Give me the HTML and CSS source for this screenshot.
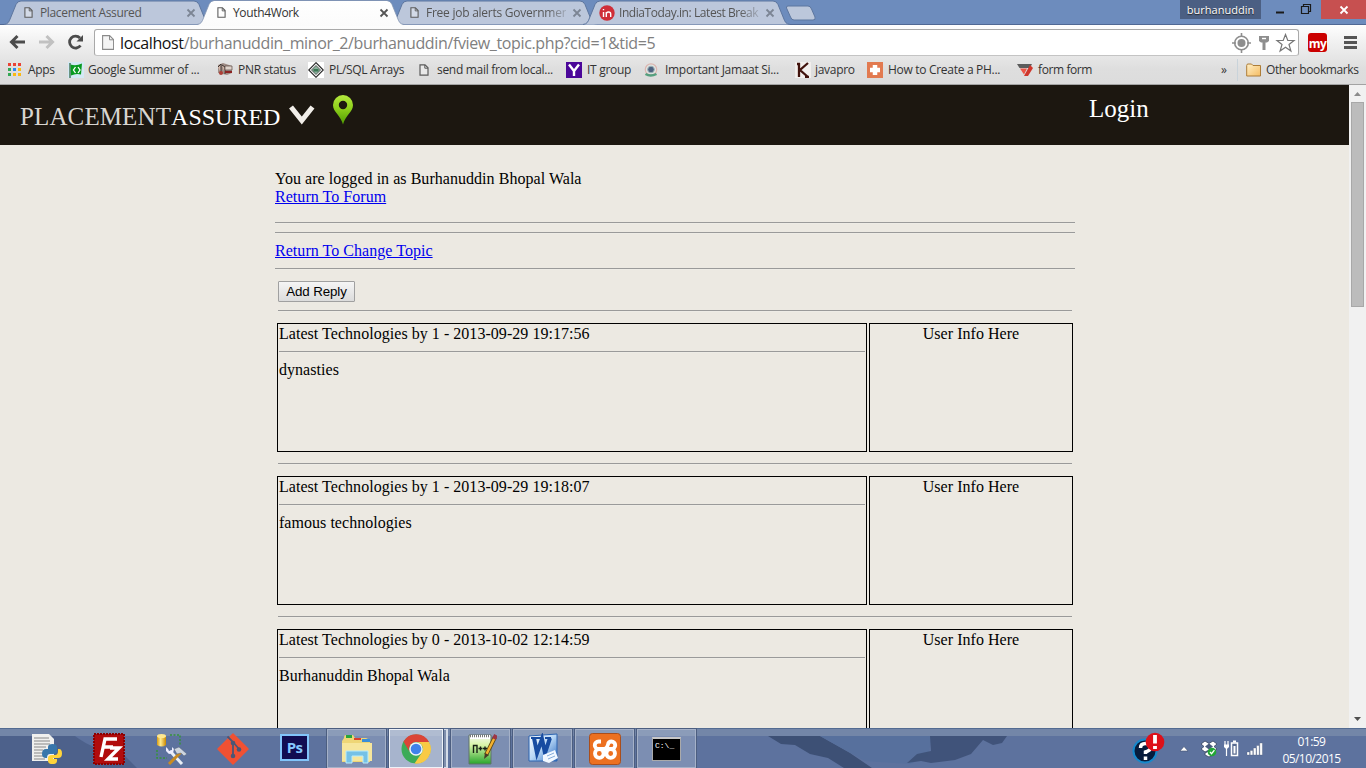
FILE: index.html
```html
<!DOCTYPE html>
<html lang="en">
<head>
<meta charset="utf-8">
<title>Youth4Work</title>
<link rel="stylesheet" href="styles.css">
</head>
<body>
<svg class="defs" aria-hidden="true">
  <defs>
    <linearGradient id="tabActive" x1="0" y1="0" x2="0" y2="1"><stop offset="0" stop-color="#fff"/><stop offset="1" stop-color="#fbfbfb"/></linearGradient>
    <linearGradient id="pin" x1="0" y1="0" x2="0" y2="1"><stop offset="0" stop-color="#b4e83e"/><stop offset=".45" stop-color="#8fd01c"/><stop offset="1" stop-color="#4d9a00"/></linearGradient>
    <linearGradient id="folder" x1="0" y1="0" x2="1" y2="1"><stop offset="0" stop-color="#fff0c8"/><stop offset="1" stop-color="#f5bc62"/></linearGradient>
    <linearGradient id="gold" x1="0" y1="0" x2="1" y2="0"><stop offset="0" stop-color="#d89a10"/><stop offset=".4" stop-color="#ffeb90"/><stop offset="1" stop-color="#c98700"/></linearGradient>
    <linearGradient id="npp" x1="0" y1="0" x2="0" y2="1"><stop offset="0" stop-color="#f4f8f2"/><stop offset=".35" stop-color="#d9f4a8"/><stop offset="1" stop-color="#28a52c"/></linearGradient>
    <linearGradient id="word" x1="0" y1="0" x2="1" y2="1"><stop offset="0" stop-color="#fff"/><stop offset=".5" stop-color="#b6d6f5"/><stop offset="1" stop-color="#2d6cc2"/></linearGradient>
    <symbol id="doc" viewBox="0 0 10 12"><path d="M1 .8h5l3 3v7.4H1z" fill="#fff" fill-opacity=".35" stroke="#5b5b5b" stroke-width="1.2"/><path d="M5.8 1v3.2H9" fill="none" stroke="#5b5b5b"/></symbol>
    <symbol id="x" viewBox="0 0 10 10"><path d="M1.5 1.5l7 7m0-7l-7 7" stroke="currentColor" stroke-width="1.8"/></symbol>
    <symbol id="tab" viewBox="0 0 207 25"><path d="M0 24.5C4 24 5 22 6.500 18L12 4.500Q13.500 1 17 1H190Q193.500 1 195 4.500L200.500 18C202 22 203 24 207 24.500" fill="#bcc7db" stroke="#5d769f"/></symbol>
  </defs>
</svg>

<div class="tabstrip">
  <div class="tab"><svg class="tab-bg"><use href="#tab"/></svg><svg class="doc"><use href="#doc"/></svg><span class="tab-title t1">Placement Assured</span><svg class="close"><use href="#x"/></svg></div>
  <div class="tab active"><svg class="tab-bg" viewBox="0 0 207 26"><path d="M0 25C4 24 5 22 6.500 18L12 4.500Q13.500 1 17 1H190Q193.500 1 195 4.500L200.500 18C202 22 203 24 207 25V26H0z" fill="url(#tabActive)"/><path d="M0 24.500C4 24 5 22 6.500 18L12 4.500Q13.500 .5 17 .5H190Q193.500 .5 195 4.500L200.500 18C202 22 203 24 207 24.500" fill="none" stroke="#8495b3" stroke-width=".8"/></svg><svg class="doc"><use href="#doc"/></svg><span class="tab-title t2">Youth4Work</span><svg class="close"><use href="#x"/></svg></div>
  <div class="tab"><svg class="tab-bg"><use href="#tab"/></svg><svg class="doc"><use href="#doc"/></svg><span class="tab-title t3 fade">Free job alerts Governmen</span><svg class="close"><use href="#x"/></svg></div>
  <div class="tab last"><svg class="tab-bg"><use href="#tab"/></svg><svg class="in" viewBox="0 0 16 16"><circle cx="8" cy="8" r="7.700" fill="#cf2e38"/><path d="M4.500 7v5M4.500 4v1.300M7.300 12V7M7.300 9q0-2 2.200-2t2.200 2v3" fill="none" stroke="#fff" stroke-width="1.400"/></svg><span class="tab-title t4 fade">IndiaToday.in: Latest Break</span><svg class="close"><use href="#x"/></svg></div>
  <svg class="newtab" viewBox="0 0 32 16"><path d="M3 1H23Q25.500 1 26.500 4L30 12Q31 15 28 15H9Q6.500 15 5.500 12L1.500 3Q1 1 3 1z" fill="#bcc7db" stroke="#5d769f"/></svg>
  <div class="window-controls">
    <span class="profile">burhanuddin</span>
    <svg class="win" viewBox="0 0 40 19"><path d="M3 12.500h8" stroke="#1a1a1a" stroke-width="2"/><path d="M28.500 6.500h7v7h-7zM30.500 6V4.500h7v7H36" fill="none" stroke="#1a1a1a" stroke-width="1.200"/></svg>
    <span class="win-close"><svg viewBox="0 0 10 10"><path d="M1.500 1.500l7 7m0-7l-7 7" stroke="#fff" stroke-width="1.800"/></svg></span>
  </div>
</div>

<div class="chrome">
  <div class="toolbar">
    <svg class="nav" viewBox="0 0 90 30">
      <path d="M25 17H12M17.500 11l-6 6 6 6" fill="none" stroke="#4c4c4c" stroke-width="3"/>
      <path d="M39 17h13M46.500 11l6 6-6 6" fill="none" stroke="#c1c1c1" stroke-width="3"/>
      <path d="M80.500 20.500A6 6 0 1 1 80 13" fill="none" stroke="#4c4c4c" stroke-width="2.800"/><path d="M83 10v6.500h-6.500z" fill="#4c4c4c"/>
    </svg>
    <div class="omnibox">
      <svg class="page" viewBox="0 0 12 15"><path d="M.6.6h7l4 4v9.800H.6z" fill="#f4f4f4" stroke="#8a8a8a" stroke-width="1.100"/><path d="M7.500.8v4h4" fill="none" stroke="#8a8a8a"/></svg>
      <span class="url"><b>localhost</b>/burhanuddin_minor_2/burhanuddin/fview_topic.php?cid=1&amp;tid=5</span>
      <svg class="omni-icons" viewBox="0 0 64 20">
        <g fill="none" stroke="#8e8e8e" stroke-width="1.600"><circle cx="9.500" cy="10" r="6.800"/><path d="M9.500 0v4M9.500 16v4M0 10h4M15 10h4"/></g><circle cx="9.500" cy="10" r="4" fill="#8e8e8e"/>
        <path d="M27 3h10v5l-2 1.500h-1.500V17h-3V9.500H29L27 8z" fill="#8e8e8e"/><path d="M30 5.500h4" stroke="#fff" stroke-width="1.400"/>
        <path d="M53.500 1.500l2.300 6h6.200l-5 4 1.900 6.500-5.400-3.800-5.400 3.800 1.900-6.500-5-4h6.200z" fill="#fff" stroke="#777" stroke-width="1.200"/>
      </svg>
    </div>
    <span class="my">my</span>
    <span class="burger"></span>
  </div>
  <div class="bookmarks">
    <div class="bm"><svg viewBox="0 0 16 16"><path d="M0 1h3v3H0z M5 1h3v3H5z M10 1h3v3h-3z" fill="#ea4335"/><path d="M0 6h3v3H0zM0 11h3v3H0z" fill="#34a853"/><path d="M5 6h3v3H5z" fill="#2b88f0"/><path d="M10 6h3v3h-3zM5 11h3v3H5zM10 11h3v3h-3z" fill="#fbb912"/></svg><span class="b1">Apps</span></div>
    <div class="bm"><svg viewBox="0 0 16 16"><path d="M0 0h16v16H0z" fill="#d4e9f5"/><path d="M2 1v15" stroke="#235b35" stroke-width="1.200"/><path d="M2.500 2.500Q8 4.500 14 1.500L13 12.500Q8 11 3 13.500z" fill="#089a20"/><path d="M7.500 5L5.500 8l2 3M10 5l2 3-2 3" stroke="#fff" stroke-width="1.300" fill="none"/></svg><span class="b2">Google Summer of ...</span></div>
    <div class="bm"><svg viewBox="0 0 16 16"><path d="M1 3l5-2 9 3v7l-5 2-9-2z" fill="#a08d86"/><path d="M1 5l3-3v9M5 3l3 2v7" stroke="#3b3331" fill="#d3b7a9"/><path d="M8 4h7v4H8z" fill="#ded2ca" stroke="#5c4a45" stroke-width=".7"/><path d="M8 9h7v2H8z" fill="#8d2222"/><circle cx="4" cy="11" r="2" fill="#ad3e36"/></svg><span class="b3">PNR status</span></div>
    <div class="bm"><svg viewBox="0 0 16 16"><path d="M0 0h16v16H0z" fill="#fff"/><path d="M8 .7L15.300 8 8 15.300.7 8z" fill="#f4f4f4" stroke="#222" stroke-width="1.100"/><path d="M8 3.500L12.500 8 8 12.500 3.500 8z" fill="#88b09a" stroke="#444" stroke-width=".8"/><path d="M5.500 7h5v2.500h-5z" fill="#3c7655"/></svg><span class="b4">PL/SQL Arrays</span></div>
    <div class="bm"><svg class="doc"><use href="#doc"/></svg><span class="b5">send mail from local...</span></div>
    <div class="bm"><svg viewBox="0 0 16 16"><path d="M0 0h16v16H0z" fill="#4b0799"/><path d="M3 2.500l5 6.500 5-6.500M8 9v5" fill="none" stroke="#fff" stroke-width="2.400"/></svg><span class="b6">IT group</span></div>
    <div class="bm"><svg viewBox="0 0 16 16"><circle cx="7" cy="7.500" r="5.700" fill="#dfe5e3" stroke="#dcb5af" stroke-width="1.200"/><circle cx="7" cy="7.500" r="3.300" fill="#4d6280" stroke="#9db3b7"/><path d="M1.500 12q5 3 11 0" stroke="#55a07f" stroke-width="2.500" fill="none"/></svg><span class="b7">Important Jamaat Si...</span></div>
    <div class="bm"><svg viewBox="0 0 16 16"><path d="M0 0h16v16H0z" fill="#f2efed"/><path d="M4 1v14M13 1L5 8l8 7M2 2h3M10 15h4" fill="none" stroke="#41130d" stroke-width="2.300"/></svg><span class="b8">javapro</span></div>
    <div class="bm"><svg viewBox="0 0 16 16"><path d="M0 0h16v16H0z" fill="#e27a50"/><path d="M8 3v10M3 8h10" stroke="#fff" stroke-width="4.500"/></svg><span class="b9">How to Create a PH...</span></div>
    <div class="bm"><svg viewBox="0 0 16 16"><path d="M0 2h15l-2 4H2.500z" fill="#5c5c5c"/><path d="M3 6.500h7l-3 6z" fill="#ec5546"/><path d="M13 3l3 3-5 8H7z" fill="#cf362b"/></svg><span class="b10">form form</span></div>
    <span class="more">»</span>
    <div class="bm other"><svg viewBox="0 0 16 16"><path d="M.7 3.500Q.7 2 2 2h3.500L7 3.500h7.500V14H.7z" fill="url(#folder)" stroke="#ad7d38"/></svg><span class="b11">Other bookmarks</span></div>
  </div>
</div>

<div class="viewport">
  <div class="site">
    <header class="site-header">
      <span class="brand"><span class="brand-a">PLACEMENT</span><span class="brand-b">ASSURED</span></span>
      <svg class="chev" viewBox="0 0 26 20"><path d="M2 2l10.800 13.500L23.500 2" fill="none" stroke="#f1eee9" stroke-width="5"/></svg>
      <svg class="marker" viewBox="0 0 20 30"><path fill-rule="evenodd" d="M10 0a10 10 0 0 1 10 10C20 17 12.500 20 10 29.500 7.500 20 0 17 0 10A10 10 0 0 1 10 0zm0 5.800a4.200 4.200 0 1 0 0 8.400 4.200 4.200 0 0 0 0-8.400z" fill="url(#pin)"/></svg>
      <span class="login">Login</span>
    </header>
    <main class="forum">
      <p>You are logged in as Burhanuddin Bhopal Wala<br><a href="#">Return To Forum</a></p>
      <hr><hr>
      <a class="row-link" href="#">Return To Change Topic</a>
      <hr>
      <div class="topic">
        <button class="reply">Add Reply</button>
        <hr>
        <div class="post"><div class="cell">Latest Technologies by 1 - 2013-09-29 19:17:56<hr>dynasties</div><div class="cell user">User Info Here</div></div>
        <hr>
        <div class="post"><div class="cell">Latest Technologies by 1 - 2013-09-29 19:18:07<hr>famous technologies</div><div class="cell user">User Info Here</div></div>
        <hr>
        <div class="post"><div class="cell">Latest Technologies by 0 - 2013-10-02 12:14:59<hr>Burhanuddin Bhopal Wala</div><div class="cell user">User Info Here</div></div>
      </div>
    </main>
  </div>
  <div class="scrollbar">
    <svg viewBox="0 0 17 17"><path d="M5 11h7L8.500 7z" fill="#8b8b8b"/></svg>
    <span class="thumb"></span>
    <svg viewBox="0 0 17 17"><path d="M5 6h7l-3.500 4z" fill="#505050"/></svg>
  </div>
</div>

<div class="taskbar">
  <svg class="wallpaper" viewBox="0 0 1366 40" preserveAspectRatio="none">
    <path d="M0 8h75q18 14 50 20l12 12H0z" fill="#40547b" opacity=".55"/>
    <path d="M768 8h52l30 17 22 15h-28l-16-10-18-4-15-9-14-1z" fill="#3d5075"/>
    <path d="M820 8h112l-4 20-18 8-45-3z" fill="#57709d"/>
    <path d="M930 8h77l-5 7-9 2-10-5-12 14-16 6-24 3-10-2-14 2 10-9 14-3z" fill="#3d5075" opacity=".9"/>
    <path d="M0 .5h1366" stroke="#536b91"/><path d="M0 1h1366v7H0z" fill="#7386a8"/>
  </svg>
  <div class="slot"><svg viewBox="0 0 32 32"><path d="M1 1h17l5 5v22H1z" fill="#f0f0ee"/><path d="M3 5h15M3 8h16M3 11h16M3 14h12M3 17h9M3 20h9M3 23h9M3 26h11" stroke="#888"/><path d="M17 17v-3q0-3 4.500-3t4.500 3v4q0 3-4 3h-3q-3 0-3 4h-1q-4 0-4-4 0-5 4-5h6" fill="#3776ab"/><path d="M27 16h1q3 0 3 4.500t-4 4.500h-5v1h4v2q0 3-4.500 3T17 28v-3q0-3 4-3h3q3 0 3-4z" fill="#ffd43b"/></svg></div>
  <div class="slot"><svg viewBox="0 0 32 32"><path d="M1 1h30v30H1z" fill="#b10c0c" stroke="#8d0000" stroke-width="2" stroke-dasharray="2 1"/><path d="M8 24l4-18h12M10 14h10M17 15h9L15 26h10" fill="none" stroke="#fff" stroke-width="3.400"/></svg></div>
  <div class="slot"><svg viewBox="0 0 32 32"><path d="M2 3v9q5 3 9 0V3z" fill="url(#gold)"/><ellipse cx="6.500" cy="3" rx="4.500" ry="2" fill="#ffe88f"/><path d="M15 2h10v11M2 17v8h10" fill="none" stroke="#36933a" stroke-width="1.500" stroke-dasharray="2 1.500"/><path d="M15 18l12 13" stroke="#e9eef5" stroke-width="3"/><path d="M11 14v4l3 3 4-1 1-4-2-2v3l-3 1-1-2z" fill="#eef"/><path d="M26 19L14 31" stroke="#c98b20" stroke-width="3"/><path d="M19 16l5-2 8 7-3 2-3-3-4 1z" fill="#ced5df" stroke="#536079" stroke-width=".5"/></svg></div>
  <div class="slot"><svg viewBox="0 0 32 32"><path d="M16 1l15 15-15 15L1 16z" fill="#f05133" stroke="#f05133" stroke-width="1.500" stroke-linejoin="round"/><path d="M10.500 3.500L16 9v14M16 9l6 7" fill="none" stroke="#4b5675" stroke-width="1.800"/><circle cx="16" cy="10" r="2.300" fill="#4b5675"/><circle cx="22" cy="16.500" r="2.300" fill="#4b5675"/><circle cx="16" cy="23" r="2.300" fill="#4b5675"/></svg></div>
  <div class="slot"><span class="ps">Ps</span></div>
  <div class="slot open"><svg viewBox="0 0 32 32"><path d="M3 5q0-3 2-3h7l2 3h11l4 2v22H1V8z" fill="#eed676"/><path d="M5 2h6v3H5z" fill="#26a63c"/><path d="M13 5h7v2h-7z" fill="#d9402c"/><path d="M21 6h8v3h-8z" fill="#3a8fd8"/><path d="M1 10h30v18H1z" fill="#f6e69c"/><path d="M5 30V18h22v12h-5v-7H11v7z" fill="#75c1e6" stroke="#b9ecfc"/></svg></div>
  <div class="slot open current"><svg viewBox="0 0 32 32"><circle cx="16" cy="16" r="14.500" fill="#3cab58"/><path d="M3.500 8.500A14.500 14.500 0 0 1 29 9H16a7 7 0 0 0-6.300 10z" fill="#db4437"/><path d="M29 9a14.500 14.500 0 0 1-14.500 21.500L22 19.500A7 7 0 0 0 16 9z" fill="#f8ca45"/><circle cx="16" cy="16" r="6.800" fill="#f1f4f7"/><circle cx="16" cy="16" r="5.300" fill="#3f82eb"/></svg></div>
  <div class="slot open"><svg viewBox="0 0 32 32"><path d="M4 2h22v29H4z" fill="url(#npp)" stroke="#60726a"/><path d="M5 2h20v4H5z" fill="#fff"/><path d="M5 3h20" stroke="#777" stroke-width="2.500" stroke-dasharray="1 1"/><path d="M8.500 20v-7.500H12V20M13.500 15.500h4M15.500 13.500v4M18 15.500h4M20 13.500v4" fill="none" stroke="#182016" stroke-width="1.400"/><path d="M30 4L21 22" stroke="#5d4611" stroke-width="4"/><path d="M30 4L21 22" stroke="#f3b230" stroke-width="2.500"/><path d="M31 2l-2 4" stroke="#9d3546" stroke-width="4"/><path d="M20 20l-1 6 5-4z" fill="#493b25"/></svg></div>
  <div class="slot open"><svg viewBox="0 0 32 32"><path d="M2 3l28-2v27H2z" fill="url(#word)" stroke="#2c64b1"/><path d="M4 5h7M9 5h6M18 5h6" stroke="#174ca1" stroke-width="2"/><path d="M7 5l3 15 5-14 3 14 5-15" fill="none" stroke="#174ca1" stroke-width="4"/><path d="M16 22l12-5 3 8-9 5-6-2z" fill="#f2f8ff"/><path d="M20 23l7-3M21 26l7-3" stroke="#85acd9"/></svg></div>
  <div class="slot open"><svg viewBox="0 0 32 32"><rect x=".5" y=".5" width="31" height="31" rx="3" fill="#ec7020" stroke="#a94e1c"/><g fill="none" stroke="#fff" stroke-width="3.800"><circle cx="10.300" cy="20.500" r="4.300"/><circle cx="21.700" cy="20.500" r="4.300"/><path d="M12 8.500H9.500a3.500 3.500 0 0 0 0 7.500h13a3.500 3.500 0 0 0 0-7.500q-3 0-3.500 3t-3 4.500"/></g></svg></div>
  <div class="slot open"><span class="cmd">C:\_</span></div>
  <div class="tray">
    <svg class="help" viewBox="0 0 34 34"><circle cx="13" cy="19" r="11.500" fill="#071c3c" stroke="#1689cc" stroke-width="2"/><path d="M8.500 16q0-4.500 5-4.500t5 4q0 3-5 4.500v2M13.500 24.500v3.500" fill="none" stroke="#fff" stroke-width="3.500"/><circle cx="23" cy="10" r="9.300" fill="#dd1019"/><path d="M23 3v8.500M23 14v3" stroke="#fff" stroke-width="3.800"/></svg>
    <svg class="tray-icons" viewBox="0 0 90 20">
      <path d="M1 12h8L5 7.500z" fill="#fff" stroke="#414f6b" stroke-width=".6"/>
      <path d="M22 5l4-3 4 2.500L34 2l4 3-3 2.500 3 2.500-4 3-4-2-4 2-4-3 3-2.500zM26 14l4-2 4 2v2l-4 2-4-2z" fill="#fff" stroke="#33415d" stroke-width=".8"/><path d="M26 7.500l4-3 4 3-4 3z" fill="#485b7d"/><circle cx="33" cy="13" r="4.300" fill="#22a635"/><path d="M31 13l1.600 1.700 2.800-3.500" fill="none" stroke="#fff" stroke-width="1.300"/>
      <path d="M46 2v4M49 2v4M47.500 9v8" stroke="#fff" stroke-width="1.200"/><path d="M45 5.500h5V8l-1.500 1.500h-2L45 8z" fill="#fff"/><path d="M52.500 4h6v12.500h-6z" fill="#586b91" stroke="#fff" stroke-width="1.500"/><path d="M54 1.500h3v2h-3zM54.500 7h2v7.500h-2z" fill="#fff"/>
      <path d="M68 13h2.600v3H68zM71.200 11.500h2.600V16h-2.600zM74.400 9h2.600v7h-2.600zM77.600 6.500h2.600V16h-2.600zM80.800 4h2.600v12h-2.600z" fill="#fff" stroke="#44516d" stroke-width=".3"/>
    </svg>
    <div class="clock"><span class="time">01:59</span><span class="date">05/10/2015</span></div>
  </div>
</div>
</body>
</html>
```
FILE: styles.css
```css
* { box-sizing: border-box; }
body { margin: 0; width: 1366px; height: 768px; overflow: hidden; display: flex; flex-direction: column; font-family: "Open Sans", "Noto Sans", sans-serif; font-size: 12px; color: #333; }
svg { display: block; flex: none; }
.defs { position: absolute; width: 0; height: 0; }

/* window frame and tabs */
.tabstrip { height: 25px; flex: none; background: #6d8cbd; display: flex; padding-left: 4px; border-bottom: 1px solid #506894; }
.tab { position: relative; width: 207px; height: 25px; margin-right: -14px; padding-left: 20px; display: flex; align-items: center; flex: none; color: #555; }
.tab.active { z-index: 2; color: #333; }
.tab.last { margin-right: -5px; padding-left: 16px; }
.tab-bg { position: absolute; left: 0; top: 0; width: 207px; height: 25px; }
.active .tab-bg { height: 26px; }
.doc { width: 10px; height: 12px; }
.tab .doc { position: relative; width: 9px; height: 11px; }
.tab-title { position: relative; margin-left: 7px; width: 140px; white-space: nowrap; line-height: 26px; letter-spacing: -.35px; }
.t3 { letter-spacing: -.25px; }
.last .tab-title { margin-left: 4px; letter-spacing: -.43px; }
.fade { -webkit-mask-image: linear-gradient(90deg, #000 120px, rgba(0, 0, 0, .25) 140px); mask-image: linear-gradient(90deg, #000 120px, rgba(0, 0, 0, .25) 140px); }
.close { position: relative; margin-left: 6px; width: 10px; height: 10px; color: #7c8594; }
.active .close { color: #555; }
.in { position: relative; width: 16px; height: 16px; }
.newtab { width: 32px; height: 16px; margin-top: 5px; }
.window-controls { margin-left: auto; display: flex; height: 19px; }
.profile { width: 81px; background: #4b5f83; color: #fff; text-align: center; line-height: 19px; font-size: 11px; text-shadow: 0 1px 1px #222; }
.win { width: 40px; height: 19px; margin: 0 8px 0 12px; }
.win-close { width: 45px; height: 19px; background: #c75050; display: grid; place-items: center; }
.win-close svg { width: 10px; height: 10px; }

/* toolbar and bookmarks */
.chrome { height: 60px; flex: none; background: linear-gradient(#fefefe, #f0f0f0 30%, #dedede 75%, #dcdcdc); border-bottom: 1px solid #a3a3a3; }
.toolbar { height: 31px; display: flex; padding-top: 4px; }
.nav { width: 90px; height: 30px; margin: -4px 4px 0 0; }
.omnibox { width: 1205px; height: 27px; background: #fff; border: 1px solid #a9a9a9; border-bottom-color: #c4c4c4; border-radius: 3px; display: flex; align-items: center; padding: 0 2px 0 7px; }
.page { width: 12px; height: 15px; }
.url { margin-left: 6px; font-size: 16px; color: #808080; white-space: nowrap; letter-spacing: -.37px; }
.url b { font-weight: 400; color: #111; }
.omni-icons { width: 64px; height: 20px; margin-left: auto; }
.my { width: 19px; height: 19px; margin: 4px 17px 0 9px; background: #cb0000; border-radius: 3px; color: #fff; font: bold 12px/21px "Open Sans", sans-serif; text-align: center; letter-spacing: -.5px; }
.burger { width: 13px; height: 13px; margin-top: 7px; background: repeating-linear-gradient(#555 0 3px, transparent 3px 5px); }
.bookmarks { height: 28px; display: grid; grid-template-columns: 60px 149px 91px 110px 148px 78px 151px 72px 150px 204px 16px 113px; padding-left: 8px; align-items: center; }
.bm { display: flex; align-items: center; white-space: nowrap; letter-spacing: -.3px; }
.bm span { margin-top: -1px; }
.bm svg { width: 16px; height: 16px; margin-right: 4px; }
.bm svg.doc { width: 10px; height: 12px; margin: 0 8px 0 1px; }
.b3, .b4, .b6, .b7, .b9, .b10 { padding-left: 1px; }
.b10, .b11 { letter-spacing: -.4px; }
.more { line-height: 20px; }
.other { padding-left: 8px; border-left: 1px solid #c9d3da; height: 22px; }

/* page */
.viewport { height: 643px; flex: none; display: flex; overflow: hidden; }
.site { width: 1349px; background: #ece9e2; font-family: "Liberation Serif", "Times New Roman", serif; font-size: 16px; line-height: 18px; color: #000; }
.site-header { height: 60px; background: #1c1710; display: flex; padding-left: 20px; color: #fff; }
.brand { width: 260px; font-size: 25px; line-height: 64px; white-space: nowrap; }
.brand-a { color: #d8d5d0; letter-spacing: .12px; }
.brand-b { font-size: 24px; }
.chev { width: 26px; height: 20px; margin: 20px 0 0 9px; }
.marker { width: 20px; height: 30px; margin: 10px 0 0 18px; }
.login { margin-left: 736px; font-size: 25px; line-height: 48px; }
.forum { width: 800px; margin: 25px 0 0 275px; letter-spacing: .04px; }
.forum p { margin: 0 0 16px; }
.forum a { color: #00e; }
.row-link { display: block; width: max-content; }
hr { margin: 8px 0; border: 0; border-top: 1px solid #9a9a9a; border-bottom: 1px solid #eeece6; height: 2px; }
.topic { padding: 3px 3px 0; }
.reply { display: block; width: 77px; height: 21px; padding: 0; border: 1px solid #a0a0a0; border-radius: 1px; background: linear-gradient(#f5f5f5, #dcdcdc); font: 13.33px "Liberation Sans", Arial, sans-serif; letter-spacing: -.1px; color: #000; }
.post { display: grid; grid-template-columns: 590px 204px; column-gap: 2px; margin: 11px -1px; }
.cell { height: 129px; border: 1px solid #000; padding: 1px; }
.user { text-align: center; }
.scrollbar { width: 17px; background: #f1f1f1; display: flex; flex-direction: column; }
.scrollbar svg { width: 17px; height: 17px; }
.thumb { width: 13px; height: 205px; margin: 0 2px auto; background: #bcbcbc; border: 1px solid #a8a8a8; }

/* taskbar */
.taskbar { position: relative; height: 40px; flex: none; display: flex; padding-left: 15px; background: #5d729e; }
.wallpaper { position: absolute; left: 0; top: 0; width: 1366px; height: 40px; }
.slot { position: relative; width: 59px; height: 39px; margin: 1px 1px 0 2px; display: grid; place-items: center; }
.slot svg { width: 32px; height: 32px; }
.open { background: rgba(190, 202, 222, .32); border: 1px solid #a5b1c8; outline: 1px solid #4c5e80; }
.current { width: 54px; margin-right: 6px; background: rgba(220, 227, 240, .58); border-color: #eef2f8; box-shadow: 4px 0 0 -1px #7f8fad, 5px 0 0 0 #d5dce8; }
.ps { width: 25px; height: 23px; margin-top: -2px; background: #120d52; outline: 2px solid #82c4fa; color: #85c8ff; font: bold 15px/23px "Open Sans", sans-serif; text-align: center; letter-spacing: -.8px; }
.cmd { width: 29px; height: 24px; background: #000; border: 1px solid #aaa; border-top: 2px solid #c8c8c8; color: #fff; font: 8px/14px "Liberation Mono", monospace; padding-left: 2px; }
.tray { position: relative; margin-left: auto; display: flex; color: #fff; }
.help { width: 34px; height: 34px; margin: 4px 10px 0 0; }
.tray-icons { width: 90px; height: 20px; margin: 11px -3px 0 3px; }
.clock { width: 91px; margin-right: 9px; padding-top: 5px; display: flex; flex-direction: column; align-items: center; line-height: 17px; letter-spacing: -.55px; }
```
